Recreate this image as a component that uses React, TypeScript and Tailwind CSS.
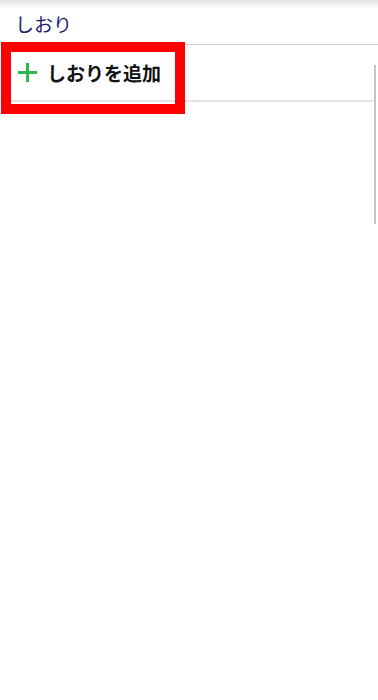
export default function App() {
  return (
    <div
      className="relative w-[378px] h-[700px] bg-white overflow-hidden"
      style={{ fontFamily: '"Noto Sans CJK JP", "Noto Sans", sans-serif' }}
    >
      {/* top shadow */}
      <div className="absolute top-0 left-0 right-0 h-[9px] bg-gradient-to-b from-[#e2e2e2] to-white" />

      {/* header */}
      <div className="relative h-[45px] border-b border-[#cfcfcf] flex items-center pl-[15px] pt-[3px]">
        <span className="text-[19px] leading-none text-[#1a206c]">しおり</span>
      </div>

      {/* add row */}
      <div className="flex">
        <div className="w-[374px] h-[57px] border-b-2 border-[#e4e4e4] flex items-center pl-[17px] gap-[9px]">
          <svg width="21" height="21" viewBox="0 0 21 21">
            <path d="M10.5 1v19M1 10.5h19" stroke="#2fb84e" strokeWidth="3" />
          </svg>
          <span className="text-[19px] leading-none font-bold text-[#111]">しおりを追加</span>
        </div>
      </div>

      {/* scroll indicator */}
      <div className="absolute left-[374px] top-[65px] w-[2px] h-[159px] bg-[#c4c4c4]" />

      {/* highlight annotation */}
      <div className="absolute left-[1px] top-[42px] w-[184px] h-[72px] border-[10px] border-[#ff0000]" />
    </div>
  );
}
